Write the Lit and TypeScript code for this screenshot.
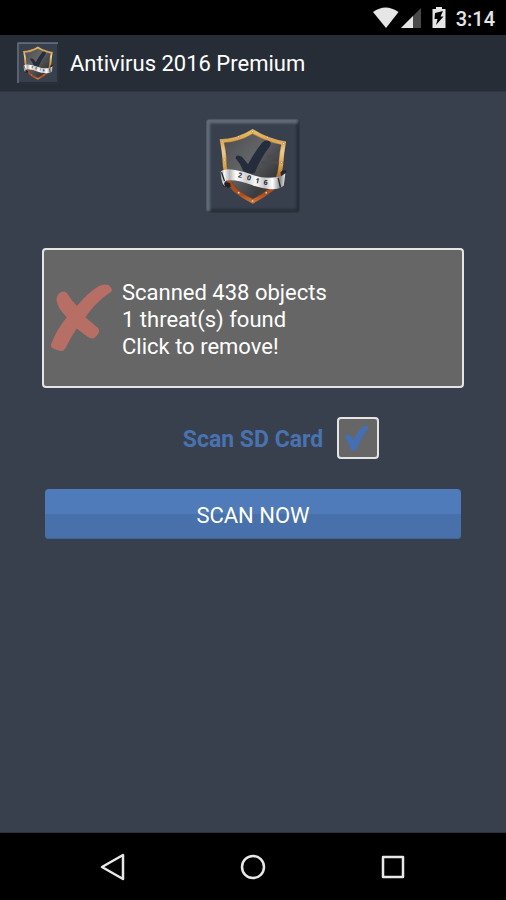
import { LitElement, html, css } from "lit";
import { customElement, property, state } from "lit/decorators.js";

@customElement("shield-logo")
class ShieldLogo extends LitElement {
  static styles = css`
    :host {
      display: block;
    }
    svg {
      display: block;
      width: 100%;
      height: 100%;
    }
    .year {
      font: 700 21px "Open Sans", "Noto Sans", sans-serif;
      fill: #20242c;
      text-anchor: middle;
    }
  `;

  render() {
    return html`
      <svg viewBox="29 26 284 284" role="img" aria-label="Antivirus 2016 shield">
        <defs>
          <linearGradient id="rim" x1="0" y1="0" x2="0" y2="1">
            <stop offset="0" stop-color="#eec16a" />
            <stop offset="0.15" stop-color="#dba552" />
            <stop offset="0.3" stop-color="#ecca92" />
            <stop offset="0.5" stop-color="#dda246" />
            <stop offset="0.72" stop-color="#a04c20" />
            <stop offset="0.88" stop-color="#b04e22" />
            <stop offset="1" stop-color="#cf7c40" />
          </linearGradient>
          <linearGradient id="face" x1="0" y1="0" x2="1" y2="1">
            <stop offset="0" stop-color="#4c4d50" />
            <stop offset="0.4" stop-color="#626366" />
            <stop offset="0.75" stop-color="#3a3b3f" />
            <stop offset="1" stop-color="#4c4d51" />
          </linearGradient>
          <linearGradient id="band" x1="0" y1="0" x2="1" y2="0">
            <stop offset="0" stop-color="#a4a4a4" />
            <stop offset="0.06" stop-color="#f4f4f4" />
            <stop offset="0.14" stop-color="#b6b6b6" />
            <stop offset="0.24" stop-color="#ffffff" />
            <stop offset="0.4" stop-color="#d0d0d0" />
            <stop offset="0.55" stop-color="#fafafa" />
            <stop offset="0.68" stop-color="#c4c4c4" />
            <stop offset="0.8" stop-color="#ffffff" />
            <stop offset="0.92" stop-color="#8a8a8a" />
            <stop offset="1" stop-color="#efefef" />
          </linearGradient>
          <filter id="soft" x="-10%" y="-10%" width="120%" height="120%">
            <feGaussianBlur stdDeviation="3" />
          </filter>
          <clipPath id="tile">
            <rect x="30" y="27" width="282" height="282" rx="9" />
          </clipPath>
        </defs>

        <g clip-path="url(#tile)">
          <rect x="30" y="27" width="282" height="282" fill="#38404e" />
          <g filter="url(#soft)" fill="none" stroke-width="14">
            <path d="M308 32V304H34" stroke="#272e39" />
            <path d="M34 304V32H306" stroke="#626b77" />
          </g>
        </g>

        <path
          d="M70 87Q124 86 170 56Q216 86 271 94Q265 125 262 165Q257 215 232 243Q202 266 170 282Q139 267 112 245Q86 217 80 170Q78 122 70 87Z"
          fill="url(#rim)"
        />
        <path
          d="M84 98Q130 95 170 71Q211 95 256 104Q250 130 248 166Q244 212 220 236Q198 254 170 267Q143 255 122 237Q97 210 92 168Q91 128 84 98Z"
          fill="url(#face)"
          stroke="#4a3722"
          stroke-width="1"
        />
        <path d="M213 138H248M197 158H248" stroke="#4a4b4f" stroke-width="8" />
        <path
          d="M118 144Q119 135 129 137Q137 137 142 145L156 163Q176 125 199 97Q207 88 218 92Q229 98 222 108Q190 150 176 190Q158 195 142 183Q132 160 118 144Z"
          fill="#252d3c"
        />
        <g fill="#fff0c8" stroke="#755022" stroke-width="1">
          <circle cx="78" cy="93" r="3" />
          <circle cx="128" cy="80" r="3" />
          <circle cx="170" cy="64" r="3" />
          <circle cx="214" cy="82" r="3" />
          <circle cx="263" cy="100" r="3" />
          <circle cx="85" cy="150" r="3" />
          <circle cx="257" cy="157" r="3" />
          <circle cx="128" cy="249" r="3" />
          <circle cx="170" cy="274" r="3" />
          <circle cx="211" cy="249" r="3" />
        </g>

        <path d="M254 187Q264 177 272 182L267 207L258 216Z" fill="#24272d" />
        <path d="M80 219Q91 215 102 220L104 231Q91 238 81 230Z" fill="#202227" />
        <path
          d="M73 185Q82 178 99 178Q134 181 170 195Q207 208 245 201Q260 199 269 190L264 227Q254 239 224 238Q193 236 166 225Q128 209 96 211Q86 212 84 220Q83 231 94 235Q74 228 73 185Z"
          fill="url(#band)"
        />
        <path d="M76 187L85 214M247 204L254 233" stroke="#292b2f" stroke-width="4" />
        <text class="year" transform="translate(131 203) rotate(9)">2</text>
        <text class="year" transform="translate(157 211) rotate(14)">0</text>
        <text class="year" transform="translate(183 220) rotate(12)">1</text>
        <text class="year" transform="translate(209 225) rotate(5)">6</text>
      </svg>
    `;
  }
}

@customElement("status-bar")
class StatusBar extends LitElement {
  @property() time = "";

  static styles = css`
    :host {
      display: flex;
      justify-content: flex-end;
      align-items: center;
      height: 35px;
      padding-right: 11px;
      background: #000;
      color: #e6e6e6;
      box-sizing: border-box;
    }
    svg {
      display: block;
      width: 76px;
      height: 24px;
      margin-right: 7px;
    }
    .time {
      font-size: 20px;
      font-weight: 500;
      line-height: 24px;
      padding-top: 2px;
    }
  `;

  render() {
    return html`
      <svg viewBox="0 0 76 24" aria-hidden="true">
        <path d="M0 6Q12.500 -3 25.500 6L13 22Z" fill="#e6e6e6" />
        <path d="M48 2V22H28Z" fill="#4a4a4a" />
        <path d="M40 10V22H28Z" fill="#e6e6e6" />
        <path d="M59.500 3H63V1H69V3H72.500V22H59.500Z" fill="#e6e6e6" />
        <path d="M62 7L70 5L67.500 10.500H70.500L63 19L64.500 13H61.500Z" fill="#000" />
      </svg>
      <span class="time">${this.time}</span>
    `;
  }
}

@customElement("nav-bar")
class NavBar extends LitElement {
  static styles = css`
    :host {
      display: flex;
      justify-content: center;
      align-items: center;
      gap: 84px;
      height: 67px;
      background: #000;
    }
    button {
      width: 56px;
      height: 48px;
      padding: 0;
      border: 0;
      background: none;
      display: grid;
      place-items: center;
    }
    svg {
      width: 28px;
      height: 28px;
      fill: none;
      stroke: #e8e8e8;
      stroke-width: 2.5;
      stroke-linejoin: round;
    }
  `;

  render() {
    return html`
      <button aria-label="Back">
        <svg viewBox="0 0 28 28"><path d="M24 2V26L3 14Z" /></svg>
      </button>
      <button aria-label="Home">
        <svg viewBox="0 0 28 28"><circle cx="14" cy="14" r="11" /></svg>
      </button>
      <button aria-label="Recent apps">
        <svg viewBox="0 0 28 28"><rect x="4" y="4" width="20" height="20" /></svg>
      </button>
    `;
  }
}

@customElement("app-root")
class AppRoot extends LitElement {
  @state() private scanSd = true;

  static styles = css`
    :host {
      display: flex;
      flex-direction: column;
      min-height: 100vh;
      background: #38404d;
      color: #fff;
      font-family: Roboto, "Liberation Sans", sans-serif;
    }
    header {
      display: flex;
      align-items: center;
      gap: 11px;
      height: 57px;
      padding: 0 17px;
      background: #262d37;
      border-bottom: 1px solid #303743;
      box-sizing: border-box;
    }
    .app-icon {
      width: 42px;
      height: 42px;
    }
    h1 {
      margin: 0;
      padding-top: 2px;
      font-size: 22px;
      font-weight: 400;
      line-height: 28px;
    }
    main {
      flex: 1;
      display: flex;
      flex-direction: column;
      padding: 27px 42px;
      border-bottom: 1px solid #2a313b;
    }
    .logo {
      width: 94px;
      height: 94px;
      align-self: center;
    }
    button {
      font: inherit;
      color: inherit;
    }
    .result {
      display: flex;
      align-items: center;
      gap: 9px;
      height: 140px;
      margin-top: 35px;
      padding: 0 7px;
      border: 2px solid #e4e4e4;
      border-radius: 4px;
      background: #666;
      font-size: 22px;
      line-height: 27px;
      text-align: left;
    }
    .message {
      padding-top: 3px;
    }
    .cross {
      width: 62px;
      height: 68px;
      flex: none;
    }
    .line {
      display: block;
    }
    .sd {
      display: flex;
      align-items: center;
      align-self: center;
      gap: 14px;
      margin: 29px 0 30px 56px;
      color: #4872b0;
      font-size: 23px;
      font-weight: 700;
      line-height: 28px;
    }
    label {
      padding-top: 3px;
    }
    .box {
      display: grid;
      width: 42px;
      height: 42px;
    }
    .box > * {
      grid-area: 1 / 1;
    }
    input {
      appearance: none;
      width: 42px;
      height: 42px;
      margin: 0;
      border: 2px solid #e4e4e4;
      border-radius: 4px;
      background: #666;
    }
    .tick {
      width: 42px;
      height: 42px;
      pointer-events: none;
      visibility: hidden;
    }
    input:checked + .tick {
      visibility: visible;
    }
    .scan {
      height: 50px;
      margin: 0 3px;
      padding: 3px 0 0;
      border: 0;
      border-radius: 4px;
      background: linear-gradient(#4f7bbb 50%, #4870ab 50%);
      box-shadow: inset 0 -1px #40659b;
      font-size: 22px;
      line-height: 28px;
    }
  `;

  private toggle(e: Event) {
    this.scanSd = (e.target as HTMLInputElement).checked;
  }

  render() {
    return html`
      <status-bar time="3:14"></status-bar>
      <header>
        <shield-logo class="app-icon"></shield-logo>
        <h1>Antivirus 2016 Premium</h1>
      </header>
      <main>
        <shield-logo class="logo"></shield-logo>
        <button class="result">
          <svg class="cross" viewBox="46 136 184 202" aria-hidden="true">
            <path
              d="M62 184Q63 165 78 159Q88 156 93 163Q106 184 123 201Q153 164 188 142Q202 135 216 139Q227 147 227 156Q224 162 216 165Q179 190 148 235L186 267Q192 276 185 285Q178 297 168 298Q161 298 154 293L122 268Q103 297 88 328Q83 336 76 335Q62 333 50 326Q44 322 47 313Q64 269 93 235Q67 210 62 184Z"
              fill="#b76e64"
            />
          </svg>
          <span class="message">
            <span class="line">Scanned 438 objects</span>
            <span class="line">1 threat(s) found</span>
            <span class="line">Click to remove!</span>
          </span>
        </button>
        <div class="sd">
          <label for="sd-card">Scan SD Card</label>
          <span class="box">
            <input id="sd-card" type="checkbox" .checked=${this.scanSd} @change=${this.toggle} />
            <svg class="tick" viewBox="498 36 126 126" aria-hidden="true">
              <path
                d="M522 97Q524 89 531 88Q536 87 539 93L547 104Q560 79 574 65Q581 60 589 63Q594 67 590 73Q570 98 559 130Q556 138 549 138Q542 139 538 132Q533 113 522 97Z"
                fill="#446fb2"
              />
            </svg>
          </span>
        </div>
        <button class="scan">SCAN NOW</button>
      </main>
      <nav-bar></nav-bar>
    `;
  }
}
